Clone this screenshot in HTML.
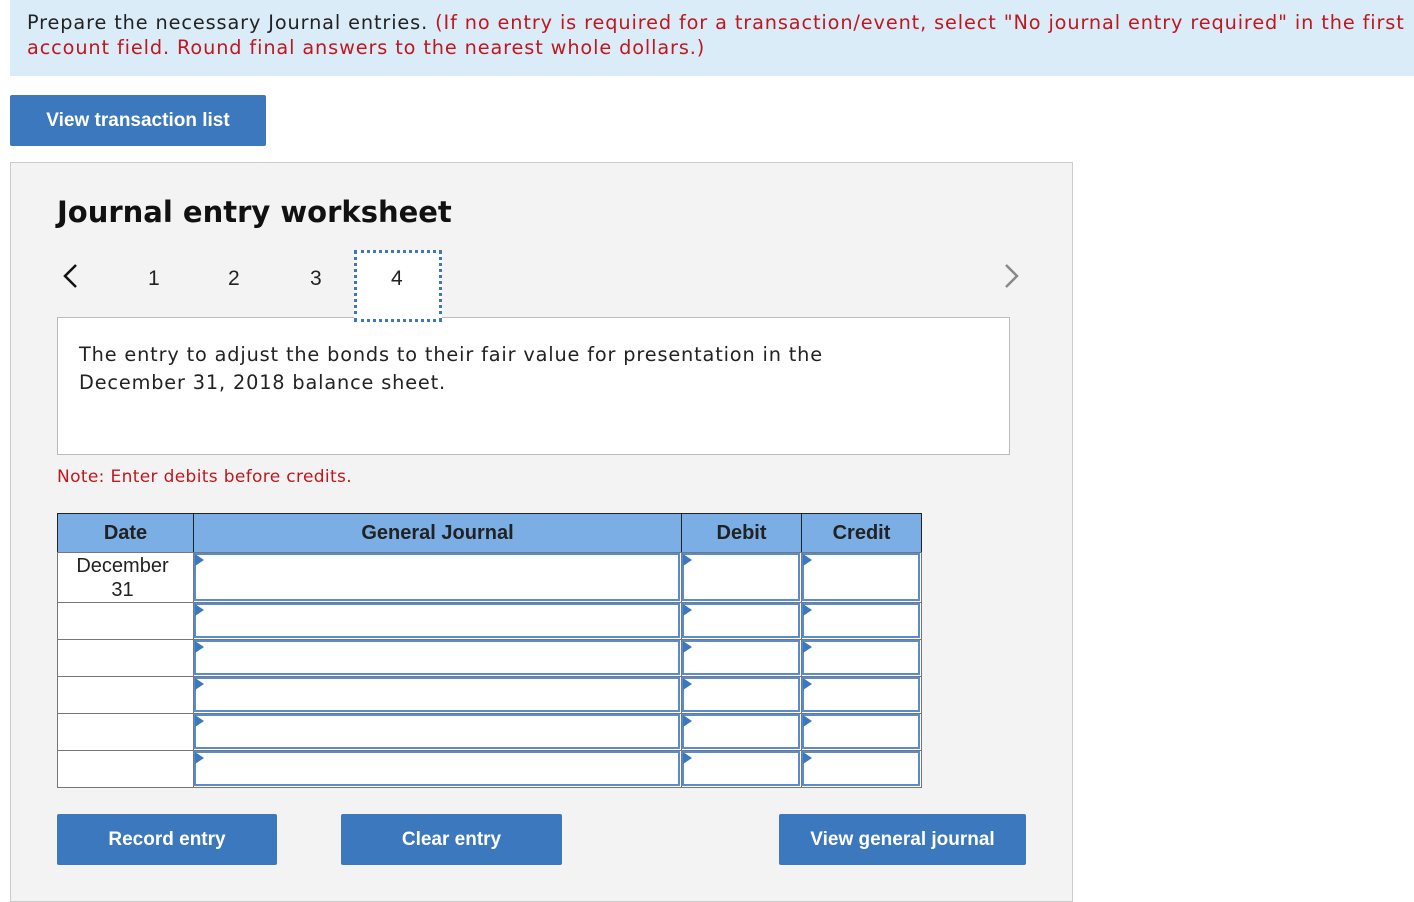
<!DOCTYPE html>
<html><head><style>
*{box-sizing:border-box;margin:0;padding:0}
body{width:1414px;height:892px;background:#fff;position:relative;overflow:hidden;font-family:"DejaVu Sans",Verdana,sans-serif;color:#222}
.abs{position:absolute}
.btn{position:absolute;background:#3c78bd;color:#fff;font-family:"Liberation Sans",Arial,sans-serif;font-weight:bold;font-size:19px;display:flex;align-items:center;justify-content:center;border-radius:2px}
.cell{position:absolute;border:1px solid #777;background:#fff}
.inp{position:absolute;border:2px solid #5a8bcb;background:#fff}
.inp:before{content:"";position:absolute;left:-1px;top:-1px;border-left:9px solid #3c78bd;border-top:6px solid transparent;border-bottom:6px solid transparent}
.hd{position:absolute;top:513px;height:40px;background:#7aaee4;border:1px solid #222;font-family:"Liberation Sans",Arial,sans-serif;font-weight:bold;font-size:20px;display:flex;align-items:center;justify-content:center;color:#222}
</style></head><body>
<div class="abs" style="left:10px;top:0;width:1404px;height:76px;background:#dbecf9"></div>
<div class="abs" style="left:27px;top:10px;width:1400px;font-size:19.3px;line-height:25px;letter-spacing:0.88px;white-space:nowrap">Prepare the necessary Journal entries. <span style="color:#c0171e">(If no entry is required for a transaction/event, select "No journal entry required" in the first<br>account field. Round final answers to the nearest whole dollars.)</span></div>
<div class="btn" style="left:10px;top:95px;width:256px;height:51px">View transaction list</div>
<div class="abs" style="left:10px;top:162px;width:1063px;height:740px;background:#f3f3f3;border:1px solid #ccc"></div>
<div class="abs" style="left:57px;top:195px;font-size:29px;font-weight:bold;color:#111">Journal entry worksheet</div>
<svg class="abs" style="left:60px;top:263px" width="20" height="26"><path d="M16 2 L5 13 L16 24" fill="none" stroke="#111" stroke-width="2.5"/></svg>
<svg class="abs" style="left:1002px;top:263px" width="20" height="26"><path d="M4 2 L15 13 L4 24" fill="none" stroke="#888" stroke-width="2.5"/></svg>
<div class="abs" style="left:148px;top:267px;font-family:'Liberation Sans',Arial;font-size:21px">1</div>
<div class="abs" style="left:228px;top:267px;font-family:'Liberation Sans',Arial;font-size:21px">2</div>
<div class="abs" style="left:310px;top:267px;font-family:'Liberation Sans',Arial;font-size:21px">3</div>
<div class="abs" style="left:57px;top:317px;width:953px;height:138px;background:#fff;border:1px solid #bbb"></div>
<div class="abs" style="left:354px;top:250px;width:88px;height:72px;border:3px dotted #3c78bd;background:#fff;z-index:2"></div>
<div class="abs" style="left:391px;top:267px;font-family:'Liberation Sans',Arial;font-size:21px;z-index:3">4</div>
<div class="abs" style="left:79px;top:341px;font-size:19.3px;line-height:28px;width:920px;letter-spacing:0.85px;white-space:nowrap">The entry to adjust the bonds to their fair value for presentation in the<br>December 31, 2018 balance sheet.</div>
<div class="abs" style="left:57px;top:467px;font-size:17px;color:#c0171e;letter-spacing:0.35px">Note: Enter debits before credits.</div>
<div class="hd" style="left:57px;width:137px">Date</div>
<div class="hd" style="left:193px;width:489px">General Journal</div>
<div class="hd" style="left:681px;width:121px">Debit</div>
<div class="hd" style="left:801px;width:121px">Credit</div>
<div id="rows"></div>
<div class="cell" style="left:57px;top:552px;width:137px;height:51px;font-family:'Liberation Sans',Arial;font-size:20px;text-align:center;line-height:24px;padding-top:1px;padding-right:6px">December<br>31</div>
<script>
var ys=[552,602,639,676,713,750,787];var h='';
for(var i=0;i<6;i++){var t=ys[i],hh=ys[i+1]-t+1;
if(i>0)h+='<div class="cell" style="left:57px;top:'+t+'px;width:137px;height:'+hh+'px"></div>';
[[193,489],[681,121],[801,121]].forEach(function(c){h+='<div class="cell" style="left:'+c[0]+'px;top:'+t+'px;width:'+c[1]+'px;height:'+hh+'px"></div><div class="inp" style="left:'+(c[0]+1)+'px;top:'+(t+1)+'px;width:'+(c[1]-3)+'px;height:'+(hh-3)+'px"></div>';});}
document.getElementById('rows').innerHTML=h;
</script>
<div class="btn" style="left:57px;top:814px;width:220px;height:51px">Record entry</div>
<div class="btn" style="left:341px;top:814px;width:221px;height:51px">Clear entry</div>
<div class="btn" style="left:779px;top:814px;width:247px;height:51px">View general journal</div>
</body></html>
